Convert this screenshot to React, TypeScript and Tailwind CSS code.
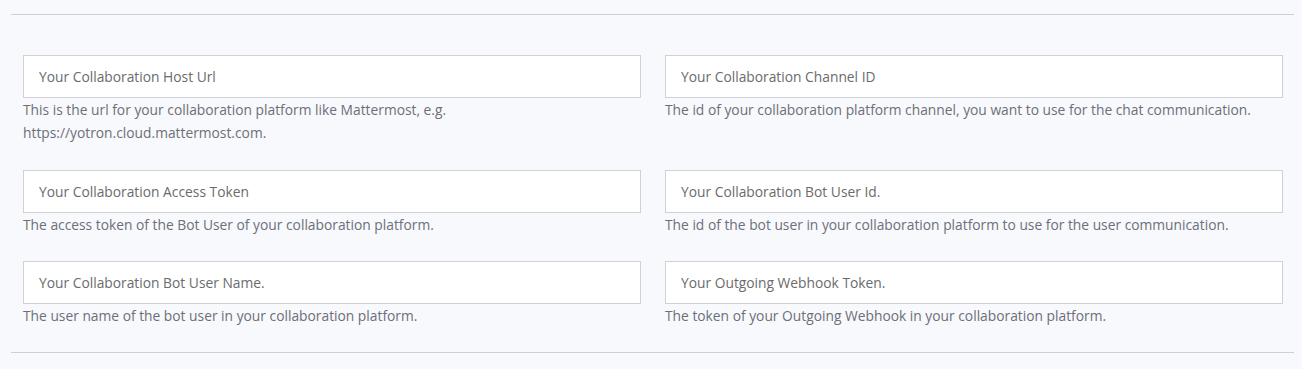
import React from "react";

const fields: { ph: string; help: string }[][] = [
  [
    {
      ph: "Your Collaboration Host Url",
      help: "This is the url for your collaboration platform like Mattermost, e.g. https://yotron.cloud.mattermost.com.",
    },
    {
      ph: "Your Collaboration Channel ID",
      help: "The id of your collaboration platform channel, you want to use for the chat communication.",
    },
  ],
  [
    {
      ph: "Your Collaboration Access Token",
      help: "The access token of the Bot User of your collaboration platform.",
    },
    {
      ph: "Your Collaboration Bot User Id.",
      help: "The id of the bot user in your collaboration platform to use for the user communication.",
    },
  ],
  [
    {
      ph: "Your Collaboration Bot User Name.",
      help: "The user name of the bot user in your collaboration platform.",
    },
    {
      ph: "Your Outgoing Webhook Token.",
      help: "The token of your Outgoing Webhook in your collaboration platform.",
    },
  ],
];

function Field({ ph, help }: { ph: string; help: string }) {
  return (
    <div className="flex flex-col">
      <input
        className="h-[43px] w-full border border-[#cfd1d6] bg-white px-[15px] text-[13.8px] text-[#555] outline-none placeholder:text-[#6b6b6b]"
        placeholder={ph}
      />
      <p className="text-[13.8px] leading-[23px] text-[#6c6f78]">{help}</p>
    </div>
  );
}

export default function App() {
  return (
    <div
      className="min-h-[369px] w-full bg-[#f8f9fd] pt-[14px] pl-[11px] pr-[8px]"
      style={{ fontFamily: '"Open Sans", "Noto Sans", sans-serif' }}
    >
      <div className="border-t border-[#cfd0d6]" />
      <div className="flex flex-col pl-[12px] pr-[11px] pt-[40px] pb-[25px]">
        {fields.map((row, i) => (
          <div
            key={i}
            className={`grid grid-cols-2 gap-x-[24px] ${i === 0 ? "mb-[26px]" : i === 1 ? "mb-[25px]" : ""}`}
          >
            {row.map((f) => (
              <Field key={f.ph} ph={f.ph} help={f.help} />
            ))}
          </div>
        ))}
      </div>
      <div className="border-t border-[#cfd0d6]" />
    </div>
  );
}
